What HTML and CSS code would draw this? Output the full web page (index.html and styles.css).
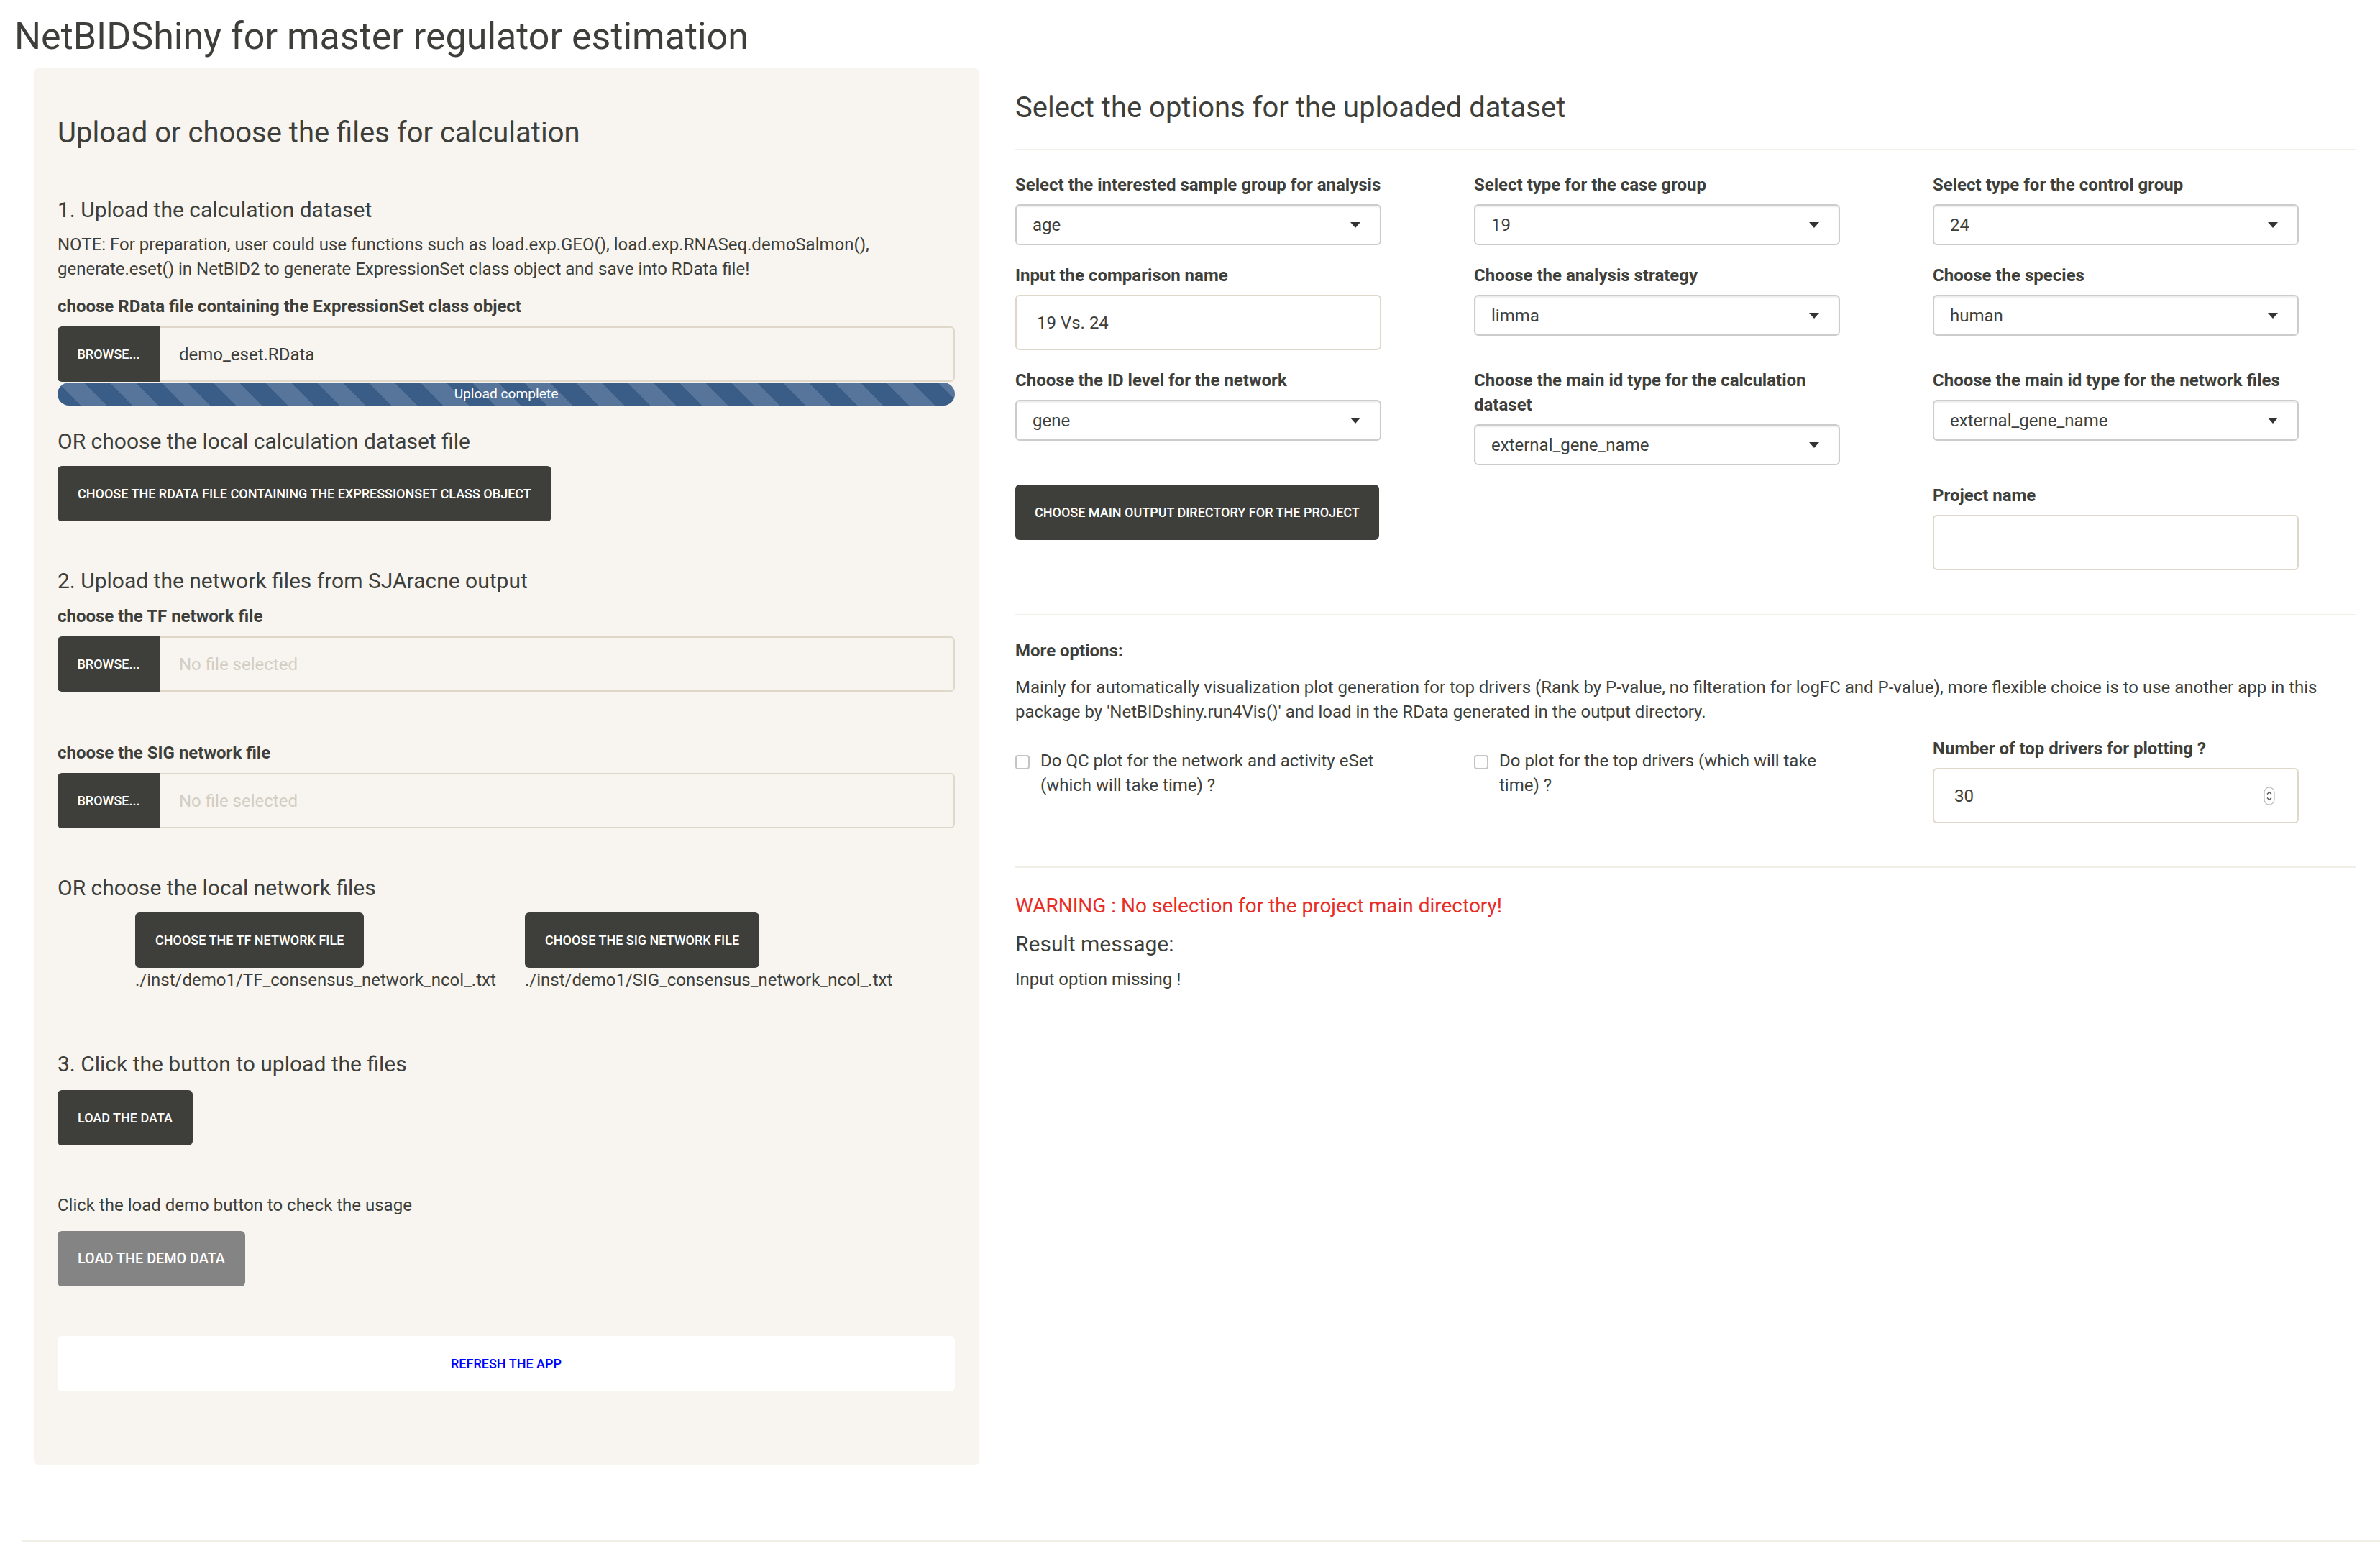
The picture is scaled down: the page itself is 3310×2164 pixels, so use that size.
FILE: index.html
```html
<!DOCTYPE html>
<html>
<head>
<meta charset="utf-8">
<title>NetBIDShiny</title>
<link rel="stylesheet" href="styles.css">
</head>
<body>
<div class="page">
  <h2 class="title">NetBIDShiny for master regulator estimation</h2>
  <div class="layout">
    <aside class="well">
      <h3 class="heading-lg mt-34">Upload or choose the files for calculation</h3>
      <h4 class="heading-md mt-68">1. Upload the calculation dataset</h4>
      <p class="text mt-15">NOTE: For preparation, user could use functions such as load.exp.GEO(), load.exp.RNASeq.demoSalmon(), generate.eset() in NetBID2 to generate ExpressionSet class object and save into RData file!</p>
      <label class="label mt-18">choose RData file containing the ExpressionSet class object</label>
      <div class="file-input mt-11">
        <span class="btn file-btn">Browse...</span>
        <span class="file-name">demo_eset.RData</span>
      </div>
      <div class="progress mt-1">Upload complete</div>
      <h4 class="heading-md mt-34">OR choose the local calculation dataset file</h4>
      <span class="btn mt-18">Choose the RData file containing the ExpressionSet class object</span>

      <h4 class="heading-md mt-67">2. Upload the network files from SJAracne output</h4>
      <label class="label mt-16">choose the TF network file</label>
      <div class="file-input mt-11">
        <span class="btn file-btn">Browse...</span>
        <span class="file-name placeholder">No file selected</span>
      </div>
      <label class="label mt-68">choose the SIG network file</label>
      <div class="file-input mt-11">
        <span class="btn file-btn">Browse...</span>
        <span class="file-name placeholder">No file selected</span>
      </div>
      <h4 class="heading-md mt-67">OR choose the local network files</h4>
      <div class="net-files mt-18">
        <div class="net-file net-file-tf">
          <span class="btn">Choose the TF network file</span>
          <span class="path">./inst/demo1/TF_consensus_network_ncol_.txt</span>
        </div>
        <div class="net-file">
          <span class="btn">Choose the SIG network file</span>
          <span class="path">./inst/demo1/SIG_consensus_network_ncol_.txt</span>
        </div>
      </div>

      <h4 class="heading-md mt-84">3. Click the button to upload the files</h4>
      <span class="btn mt-20">Load the data</span>
      <p class="text mt-66">Click the load demo button to check the usage</p>
      <span class="btn btn-gray mt-19">Load the demo data</span>
      <span class="btn btn-link mt-69">Refresh the app</span>
    </aside>

    <main class="main">
      <h3 class="heading-lg mt-32">Select the options for the uploaded dataset</h3>
      <hr class="rule mt-34">

      <div class="opt-row mt-31">
        <div class="field">
          <label class="label">Select the interested sample group for analysis</label>
          <div class="select"><span>age</span><i class="caret"></i></div>
        </div>
        <div class="field">
          <label class="label">Select type for the case group</label>
          <div class="select"><span>19</span><i class="caret"></i></div>
        </div>
        <div class="field">
          <label class="label">Select type for the control group</label>
          <div class="select"><span>24</span><i class="caret"></i></div>
        </div>
      </div>

      <div class="opt-row mt-25">
        <div class="field">
          <label class="label">Input the comparison name</label>
          <div class="text-input">19 Vs. 24</div>
        </div>
        <div class="field">
          <label class="label">Choose the analysis strategy</label>
          <div class="select"><span>limma</span><i class="caret"></i></div>
        </div>
        <div class="field">
          <label class="label">Choose the species</label>
          <div class="select"><span>human</span><i class="caret"></i></div>
        </div>
      </div>

      <div class="opt-row mt-25">
        <div class="field">
          <label class="label">Choose the ID level for the network</label>
          <div class="select"><span>gene</span><i class="caret"></i></div>
        </div>
        <div class="field">
          <label class="label">Choose the main id type for the calculation dataset</label>
          <div class="select"><span>external_gene_name</span><i class="caret"></i></div>
        </div>
        <div class="field">
          <label class="label">Choose the main id type for the network files</label>
          <div class="select"><span>external_gene_name</span><i class="caret"></i></div>
        </div>
      </div>

      <div class="opt-row mt-25">
        <div class="field">
          <span class="btn btn-dir">Choose main output directory for the project</span>
        </div>
        <div class="field"></div>
        <div class="field">
          <label class="label">Project name</label>
          <div class="text-input"></div>
        </div>
      </div>

      <hr class="rule mt-61">

      <label class="label mt-32">More options:</label>
      <p class="text mt-17">Mainly for automatically visualization plot generation for top drivers (Rank by P-value, no filteration for logFC and P-value), more flexible choice is to use another app in this package by 'NetBIDshiny.run4Vis()' and load in the RData generated in the output directory.</p>

      <div class="opt-row mt-17">
        <div class="field">
          <div class="check">
            <span class="check-box"></span>
            <span class="check-text">Do QC plot for the network and activity eSet (which will take time) ?</span>
          </div>
        </div>
        <div class="field">
          <div class="check">
            <span class="check-box"></span>
            <span class="check-text">Do plot for the top drivers (which will take time) ?</span>
          </div>
        </div>
        <div class="field">
          <label class="label">Number of top drivers for plotting ?</label>
          <div class="text-input number-input">
            <span>30</span>
            <svg class="spinner" width="16" height="26" viewBox="0 0 16 26">
              <rect x="1" y="1" width="14" height="24" rx="7" fill="#fff" stroke="#b8b8b8" stroke-width="1.2"/>
              <path d="M5 10.5 L8 7.5 L11 10.5" fill="none" stroke="#555" stroke-width="1.4"/>
              <path d="M5 15.5 L8 18.5 L11 15.5" fill="none" stroke="#555" stroke-width="1.4"/>
            </svg>
          </div>
        </div>
      </div>

      <hr class="rule mt-60">

      <h4 class="heading-md warning mt-37">WARNING : No selection for the project main directory!</h4>
      <h4 class="heading-md mt-21">Result message:</h4>
      <p class="text mt-16">Input option missing !</p>
    </main>
  </div>
  <hr class="rule footer-rule">
</div>
</body>
</html>
```

FILE: styles.css
```css
* {
  box-sizing: border-box;
}

body {
  margin: 0;
  background: #ffffff;
  font-family: Roboto, "Helvetica Neue", Arial, sans-serif;
  font-size: 24px;
  line-height: 34px;
  color: #3e3f3a;
}

h2, h3, h4, p {
  margin: 0;
  font-weight: 400;
}

.page {
  padding-top: 23px;
}

.title {
  font-size: 52px;
  line-height: 56px;
  margin-left: 20px;
}

.layout {
  display: flex;
  align-items: flex-start;
  margin-top: 16px;
  padding-left: 47px;
}

.well {
  width: 1315px;
  flex: none;
  padding: 33px 34px 102px 33px;
  background: #f8f5f0;
  border-radius: 6px;
  display: flex;
  flex-direction: column;
  align-items: flex-start;
}

.main {
  margin-left: 50px;
  width: 1864px;
  flex: none;
  display: flex;
  flex-direction: column;
  align-items: stretch;
}

.heading-lg {
  font-size: 40px;
  line-height: 46px;
}

.heading-md {
  font-size: 30px;
  line-height: 32px;
}

.text {
  line-height: 34px;
}

.label {
  display: block;
  font-weight: 700;
  font-size: 24px;
  line-height: 34px;
}

.mt-1 { margin-top: 1px; }
.mt-11 { margin-top: 11px; }
.mt-15 { margin-top: 15px; }
.mt-16 { margin-top: 16px; }
.mt-17 { margin-top: 17px; }
.mt-18 { margin-top: 18px; }
.mt-19 { margin-top: 19px; }
.mt-20 { margin-top: 20px; }
.mt-21 { margin-top: 21px; }
.mt-25 { margin-top: 25px; }
.mt-31 { margin-top: 31px; }
.mt-32 { margin-top: 32px; }
.mt-34 { margin-top: 34px; }
.mt-37 { margin-top: 37px; }
.mt-60 { margin-top: 60px; }
.mt-61 { margin-top: 61px; }
.mt-66 { margin-top: 66px; }
.mt-67 { margin-top: 67px; }
.mt-68 { margin-top: 68px; }
.mt-69 { margin-top: 69px; }
.mt-84 { margin-top: 84px; }

.btn {
  display: inline-flex;
  align-items: center;
  justify-content: center;
  height: 77px;
  padding: 0 28px;
  background: #3e3f3a;
  color: #ffffff;
  font-size: 18px;
  font-weight: 500;
  text-transform: uppercase;
  border-radius: 6px;
  white-space: nowrap;
}

.btn-gray {
  background: #848484;
  font-size: 19.8px;
}

.btn-link {
  align-self: stretch;
  background: #ffffff;
  color: #0000ff;
}

.file-input {
  display: flex;
  align-self: stretch;
  height: 77px;
}

.file-btn {
  width: 142px;
  padding: 0;
  border-radius: 6px 0 0 6px;
}

.file-name {
  flex: 1;
  display: flex;
  align-items: center;
  padding-left: 27px;
  background: #f8f5f0;
  border: 2px solid #dfd7ca;
  border-left: none;
  border-radius: 0 6px 6px 0;
}

.placeholder {
  color: #d3cdc2;
}

.progress {
  align-self: stretch;
  height: 32px;
  border-radius: 16px;
  background-color: #3a5d88;
  background-image: linear-gradient(45deg,
    rgba(255, 255, 255, 0.15) 25%, transparent 25%,
    transparent 50%, rgba(255, 255, 255, 0.15) 50%,
    rgba(255, 255, 255, 0.15) 75%, transparent 75%, transparent);
  background-size: 72px 72px;
  color: #ffffff;
  font-size: 19.2px;
  line-height: 32px;
  text-align: center;
}

.net-files {
  display: flex;
  margin-left: 108px;
}

.net-file {
  display: flex;
  flex-direction: column;
  align-items: flex-start;
}

.net-file-tf {
  width: 542px;
}

.path {
  line-height: 34px;
}

.rule {
  height: 0;
  margin-bottom: 0;
  margin-left: 0;
  margin-right: 0;
  border: none;
  border-top: 2px solid #f2eee8;
}

.footer-rule {
  margin-top: 105px;
  margin-left: 30px;
}

.opt-row {
  display: grid;
  grid-template-columns: 638px 638px 1fr;
  align-items: start;
}

.field {
  width: 509px;
  display: flex;
  flex-direction: column;
  align-items: stretch;
}

.field .label {
  margin-bottom: 10px;
  margin-right: -14px;
}

.select {
  height: 57px;
  display: flex;
  align-items: center;
  justify-content: space-between;
  padding: 0 27px 0 22px;
  background: #ffffff;
  border: 2px solid #cccccc;
  border-radius: 6px;
  box-shadow: inset 0 2px 2px rgba(0, 0, 0, 0.07);
}

.caret {
  width: 0;
  height: 0;
  border-style: solid;
  border-width: 8px 7px 0 7px;
  border-color: #333333 transparent transparent transparent;
}

.text-input {
  height: 77px;
  display: flex;
  align-items: center;
  padding: 0 28px;
  background: #ffffff;
  border: 2px solid #dfd7ca;
  border-radius: 6px;
}

.number-input {
  justify-content: space-between;
  padding-right: 31px;
}

.spinner {
  display: block;
}

.btn-dir {
  align-self: flex-start;
  margin-top: 2px;
  padding: 0 27px;
}

.check {
  display: flex;
  align-items: flex-start;
  margin-top: 17px;
}

.check-box {
  flex: none;
  width: 20px;
  height: 20px;
  margin-top: 9px;
  margin-right: 15px;
  background: #ffffff;
  border: 2px solid #c4c4c4;
  border-radius: 4px;
}

.check-text {
  line-height: 34px;
}

.warning {
  color: #e82d26;
  font-size: 28px;
}
```
